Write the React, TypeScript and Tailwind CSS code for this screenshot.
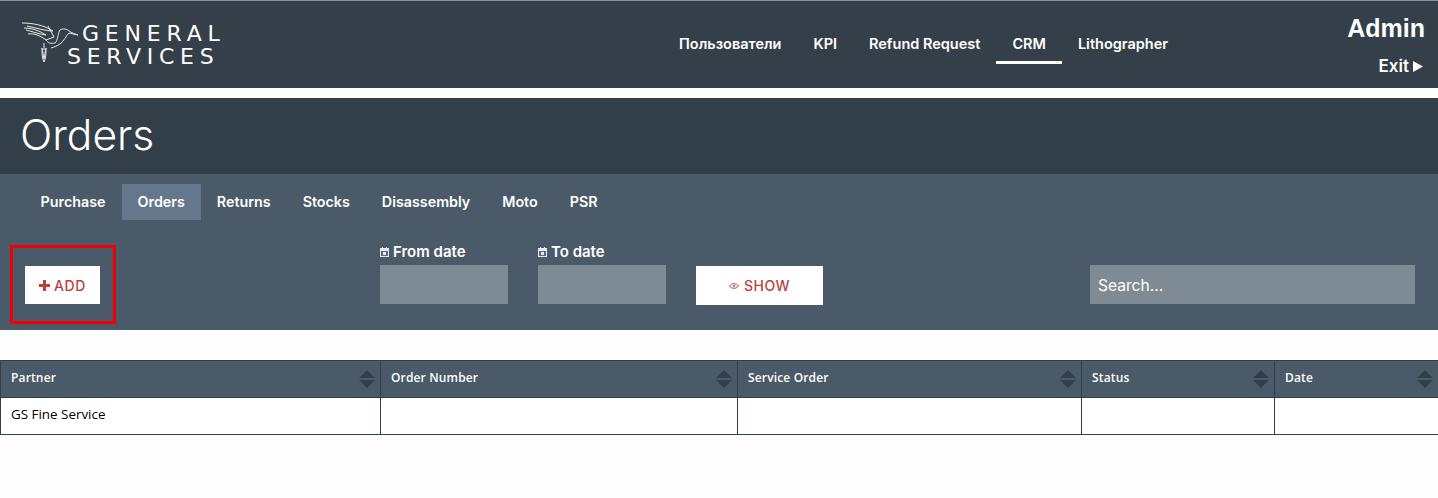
const NAV = ['Пользователи', 'KPI', 'Refund Request', 'CRM', 'Lithographer'];
const TABS = ['Purchase', 'Orders', 'Returns', 'Stocks', 'Disassembly', 'Moto', 'PSR'];
const COLUMNS = [
  { title: 'Partner', width: 'w-[380px]' },
  { title: 'Order Number', width: 'w-[357px]' },
  { title: 'Service Order', width: 'w-[344px]' },
  { title: 'Status', width: 'w-[193px]' },
  { title: 'Date', width: 'w-[164px]' },
];

function Bird() {
  return (
    <svg width="60" height="46" viewBox="0 0 60 46" fill="none" stroke="#e8eaec" strokeWidth="1" className="shrink-0">
      <path d="M0 1 C10 1 22 3 31 9 C24 9 14 6 5 4 M2 6 C10 6 18 9 24 13 C16 12 9 9 4 8 M6 12 C12 11 19 14 24 18 L32 15 L26 4" />
      <path d="M24 18 C26 21 29 22 33 21 C36 19 36 10 38 8 C41 6 45 7 47 9 C50 11 53 12 56 13 L47 11 C44 14 42 19 38 22 C35 24 32 25 29 26" />
      <path d="M22 21 L22 28 M20 26 C20 32 20 36 22 40 C24 36 24 32 24 26 C23 29 23 33 22 37 C21 33 21 29 20 26" />
    </svg>
  );
}

function CalendarIcon() {
  return (
    <svg width="9" height="10" viewBox="0 0 9 10" className="shrink-0">
      <rect x="0" y="1" width="9" height="9" fill="#e6ebef" />
      <rect x="2" y="0" width="1" height="2" fill="#e6ebef" />
      <rect x="6" y="0" width="1" height="2" fill="#e6ebef" />
      <rect x="1" y="4" width="7" height="5" fill="#5b6b7a" />
      <rect x="3" y="5" width="3" height="3" fill="#e6ebef" />
    </svg>
  );
}

function SortIcon() {
  return (
    <svg width="16" height="18" viewBox="0 0 16 18" className="shrink-0">
      <path d="M8 0 L16 8 L0 8 Z" fill="#323e48" />
      <path d="M0 10 L16 10 L8 18 Z" fill="#323e48" />
    </svg>
  );
}

export default function App() {
  return (
    <div className="h-[498px] overflow-hidden bg-[#fdfdfd] font-['Inter',sans-serif]">
      <header className="flex h-[88px] items-start border-t border-[#8a8f94] bg-[#343f49] text-white">
        <div className="mt-[21px] ml-[22px] flex w-[641px]">
          <Bird />
          <div className="-ml-[15px] font-['DejaVu_Sans',sans-serif] text-[22px] leading-[23px] tracking-[5.8px]">
            <div className="pl-[15px]">GENERAL</div>
            <div className="tracking-[5.7px]">SERVICES</div>
          </div>
        </div>
        <nav className="mt-[23px] flex">
          {NAV.map((item) => (
            <a
              key={item}
              className={`h-[40px] border-b-[3px] px-4 pt-[10px] text-[14.5px] leading-[19px] font-semibold ${
                item === 'CRM' ? 'border-white' : 'border-transparent'
              }`}
            >
              {item}
            </a>
          ))}
        </nav>
        <div className="mt-[12px] mr-[13px] ml-auto flex flex-col items-end">
          <div className="font-['Liberation_Sans',sans-serif] text-[25px] leading-[30px] font-bold">Admin</div>
          <div className="mt-[13px] mr-[2px] flex items-center gap-[4px] text-[17px] leading-[20px] font-semibold">
            Exit
            <svg width="10" height="11" viewBox="0 0 10 11">
              <path d="M0 0 L10 5.5 L0 11 Z" fill="white" />
            </svg>
          </div>
        </div>
      </header>

      <div className="h-[10px] bg-white" />

      <div className="h-[76px] bg-[#323e48] pt-[13px] pl-[20px] text-[42.5px] leading-[48px] font-light text-white">
        Orders
      </div>

      <section className="h-[156px] bg-[#4a5a69] text-white">
        <div className="flex pt-[10px] pl-[24.6px]">
          {TABS.map((tab) => (
            <a
              key={tab}
              className={`h-[36px] px-4 text-[14.3px] leading-[36px] font-semibold ${
                tab === 'Orders' ? 'bg-[#65778a]' : ''
              }`}
            >
              {tab}
            </a>
          ))}
        </div>

        <div className="mt-[25px] flex items-start pl-[10px]">
          <div className="flex h-[79px] w-[106px] items-start border-[3px] border-[#f00000] pt-[18px] pl-[12px]">
            <button className="flex h-[38px] w-[75px] items-center justify-center gap-[4px] bg-white text-[14px] font-medium tracking-[0.6px] text-[#bf3f3a]">
              <svg width="11" height="11" viewBox="0 0 11 11">
                <path d="M4 0 H7 V4 H11 V7 H7 V11 H4 V7 H0 V4 H4 Z" fill="#bf3f3a" />
              </svg>
              ADD
            </button>
          </div>

          <div className="ml-[264px] w-[128px]">
            <label className="mb-[6px] flex h-[14px] items-center gap-[4px] text-[15px] leading-[14px] font-semibold">
              <CalendarIcon />
              From date
            </label>
            <div className="h-[39px] bg-[#7f8b94]" />
          </div>

          <div className="ml-[30px] w-[128px]">
            <label className="mb-[6px] flex h-[14px] items-center gap-[4px] text-[15px] leading-[14px] font-semibold">
              <CalendarIcon />
              To date
            </label>
            <div className="h-[39px] bg-[#7f8b94]" />
          </div>

          <button className="mt-[21px] ml-[30px] flex h-[39px] w-[127px] items-center justify-center gap-[5px] bg-white text-[14px] font-medium tracking-[0.5px] text-[#bf3f3a]">
            <svg width="10" height="8" viewBox="0 0 10 8" fill="none" stroke="#bf3f3a">
              <path d="M0.5 4 C2.5 1 7.5 1 9.5 4 C7.5 7 2.5 7 0.5 4 Z" />
              <circle cx="5" cy="4" r="1" fill="#bf3f3a" stroke="none" />
            </svg>
            SHOW
          </button>

          <div className="mt-[20px] ml-[267px] flex h-[39px] w-[325px] items-center bg-[#7f8b94] pt-[2px] pl-[8px] text-[15.6px] text-white">
            Search...
          </div>
        </div>
      </section>

      <table className="mt-[30px] w-[1438px] table-fixed border-collapse font-['Open_Sans',sans-serif] text-[12px]">
        <thead>
          <tr className="h-[37px] bg-[#4a5a69] text-white">
            {COLUMNS.map((col) => (
              <th key={col.title} className={`${col.width} border border-[#323e48] pr-[5px] pl-[10px] text-left font-semibold tracking-[0.15px]`}>
                <div className="flex items-center justify-between">
                  <span className="-mt-[2px]">{col.title}</span>
                  <SortIcon />
                </div>
              </th>
            ))}
          </tr>
        </thead>
        <tbody>
          <tr className="h-[37px] bg-white text-black">
            <td className="border border-[#323e48] pb-[3px] pl-[10px] text-[13.4px] font-medium">GS Fine Service</td>
            <td className="border border-[#323e48]" />
            <td className="border border-[#323e48]" />
            <td className="border border-[#323e48]" />
            <td className="border border-[#323e48]" />
          </tr>
        </tbody>
      </table>
    </div>
  );
}
